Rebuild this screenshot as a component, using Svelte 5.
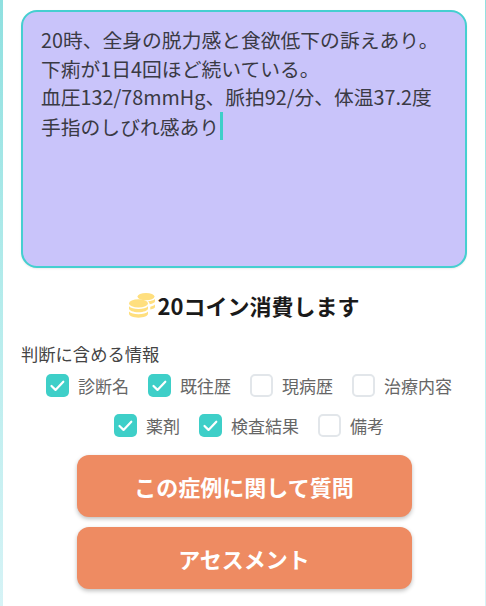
<script>
  const options = [
    { label: '診断名', checked: true },
    { label: '既往歴', checked: true },
    { label: '現病歴', checked: false },
    { label: '治療内容', checked: false },
    { label: '薬剤', checked: true },
    { label: '検査結果', checked: true },
    { label: '備考', checked: false }
  ];
  const lines = [
    '20時、全身の脱力感と食欲低下の訴えあり。',
    '下痢が1日4回ほど続いている。',
    '血圧132/78mmHg、脈拍92/分、体温37.2度'
  ];
</script>

<div class="frame">
  <main class="page">
    <div class="note">
      {#each lines as line}
        <div>{line}</div>
      {/each}
      <div>手指のしびれ感あり<span class="caret"></span></div>
    </div>

    <div class="cost">
      <svg class="coins" viewBox="0 0 26 25" width="26" height="25" aria-hidden="true">
        <g fill="#ffdf7e">
          <ellipse cx="17" cy="3.600" rx="8.500" ry="3.600" />
          <path d="M19 8.300c2.900-.2 5.500-1 7-2.300v2.300c0 1.200-2.300 2.400-5.200 2.900-.3-1.100-1-2.100-1.800-2.900z" />
          <path d="M21.300 13.700c2-.4 3.700-1.100 4.700-2.100v2.300c0 1-1.900 2-4.700 2.600z" />
          <ellipse cx="9.500" cy="10.400" rx="9.500" ry="4.100" />
          <path d="M0 13.200c1.700 1.700 5.300 2.800 9.500 2.800s7.800-1.100 9.500-2.800v2.400c0 2.100-4.300 3.700-9.500 3.700S0 17.700 0 15.600z" />
          <path d="M0 18.400c1.700 1.700 5.300 2.800 9.500 2.800s7.800-1.100 9.500-2.800v2.400c0 2.200-4.300 3.900-9.500 3.900S0 23 0 20.800z" />
        </g>
      </svg>
      <span>20コイン消費します</span>
    </div>

    <div class="section-label">判断に含める情報</div>
    <div class="options">
      {#each options as o}
        <label class="option">
          <span class="box" class:checked={o.checked}>
            {#if o.checked}
              <svg viewBox="0 0 23 23" width="23" height="23" aria-hidden="true">
                <path d="M5.500 12l4 3.900 7.800-8.200" fill="none" stroke="#fff" stroke-width="2.200" stroke-linecap="round" stroke-linejoin="round" />
              </svg>
            {/if}
          </span>
          <span class="option-text">{o.label}</span>
        </label>
      {/each}
    </div>

    <div class="actions">
      <button type="button">この症例に関して質問</button>
      <button type="button">アセスメント</button>
    </div>
  </main>
</div>

<style>
  :global(body) {
    margin: 0;
  }
  .frame {
    height: 606px;
    box-sizing: border-box;
    padding: 0 1px 0 3px;
    background: linear-gradient(180deg, #8fe0e0 0%, #b5ecec 50%, #d6f3f6 100%);
    overflow: hidden;
    font-family: "Noto Sans CJK JP", "Noto Sans", sans-serif;
  }
  .page {
    height: 100%;
    background: #fff;
    box-sizing: border-box;
    padding: 10px 18px 0;
    display: flex;
    flex-direction: column;
  }
  .note {
    height: 258px;
    box-sizing: border-box;
    padding: 14px 18px;
    background: #c9c4fa;
    border: 2px solid #45cfd0;
    border-radius: 16px;
    font-size: 19.800px;
    line-height: 28.600px;
    color: #3a3a44;
    box-shadow: 0 1px 2px rgba(0, 0, 0, 0.08);
  }
  .caret {
    display: inline-block;
    width: 3px;
    height: 28px;
    background: #3ecfc8;
    vertical-align: -5px;
    margin-left: 1px;
  }
  .cost {
    margin-top: 21px;
    display: flex;
    justify-content: center;
    align-items: center;
    gap: 3px;
    font-size: 22px;
    font-weight: 700;
    line-height: 32px;
    color: #1a1a1a;
  }
  .section-label {
    margin-top: 21px;
    font-size: 17.300px;
    line-height: 24px;
    color: #444;
  }
  .options {
    margin-top: 4px;
    padding-left: 10px;
    display: flex;
    flex-wrap: wrap;
    justify-content: center;
    gap: 10px 19px;
  }
  .option {
    display: flex;
    align-items: center;
    gap: 9px;
    height: 30px;
  }
  .box {
    width: 23px;
    height: 23px;
    box-sizing: border-box;
    border-radius: 5px;
    border: 2px solid #e2e6ea;
    background: #fff;
    display: block;
  }
  .box.checked {
    border: 0;
    background: #3ecfc8;
  }
  .box svg {
    display: block;
  }
  .option-text {
    font-size: 17px;
    color: #666;
  }
  .actions {
    margin-top: 15px;
    display: flex;
    flex-direction: column;
    align-items: center;
    gap: 10px;
  }
  button {
    width: 335px;
    height: 62px;
    border: 0;
    border-radius: 12px;
    background: #ee8b62;
    color: #fff;
    font-family: inherit;
    font-size: 22px;
    font-weight: 700;
    box-shadow: 0 2px 4px rgba(0, 0, 0, 0.25);
  }
</style>
